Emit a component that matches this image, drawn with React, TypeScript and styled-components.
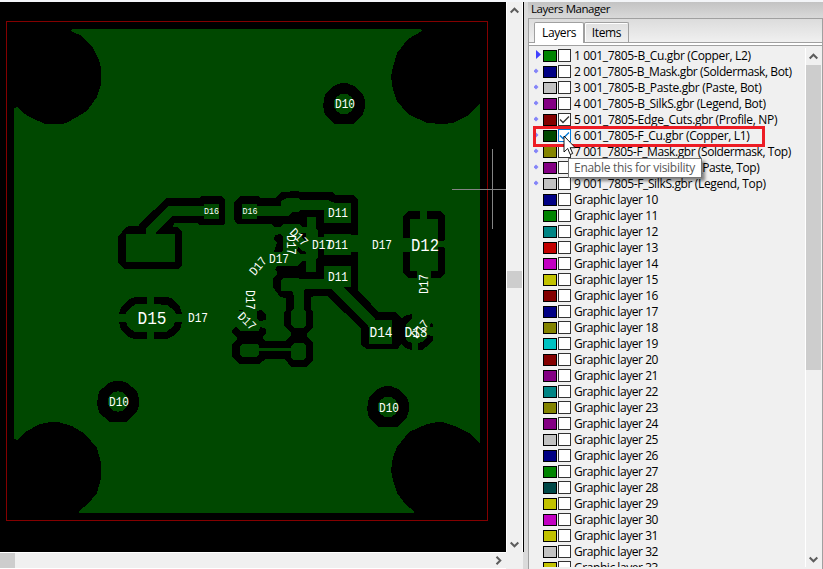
import React from 'react';
import styled, { createGlobalStyle } from 'styled-components';

const Global = createGlobalStyle`
  * { box-sizing: border-box; }
  body { margin: 0; overflow: hidden; background: #f0f0f0; font-family: "Open Sans", "Noto Sans", sans-serif; font-size: 12px; color: #000; }
`;

const Window = styled.div`
  display: flex;
  width: 823px;
  height: 569px;
  padding-top: 2px;
  background: #f3f5f8;
  overflow: hidden;
`;

const Viewer = styled.div`
  display: grid;
  grid-template-columns: 506px 17px;
  grid-template-rows: 550px 17px;
  width: 523px;
  flex: none;
  background: #f0f0f0;
`;

const Board = styled.svg`
  display: block;
  background: #000;
`;

const VBar = styled.div`
  display: flex;
  flex-direction: column;
  align-items: center;
  border-left: 1px solid #fff;
  border-right: 1px solid #fff;
  background: #f0f0f0;
`;

const HBar = styled.div`
  display: flex;
  align-items: center;
  border-top: 1px solid #fff;
  border-bottom: 1px solid #fff;
  background: #f0f0f0;
`;

const Spacer = styled.div<{ $size?: number }>`
  flex: ${p => (p.$size ? `0 0 ${p.$size}px` : '1')};
`;

const Thumb = styled.div<{ $w: number; $h: number }>`
  flex: none;
  width: ${p => p.$w}px;
  height: ${p => p.$h}px;
  background: #cdcdcd;
`;

const Divider = styled.div`
  flex: none;
  width: 5px;
  display: flex;
  flex-direction: column;
  background: #dadada;
`;

const DividerEdge = styled.div`
  width: 1px;
  height: 550px;
  background: #000;
`;

const Manager = styled.div`
  flex: 1;
  display: flex;
  flex-direction: column;
  height: 567px;
  background: #f0f0f0;
`;

const Title = styled.div`
  height: 16px;
  flex: none;
  padding-left: 3px;
  font-size: 11.5px;
  line-height: 13px;
  letter-spacing: -0.45px;
  background: linear-gradient(#c3c3c3, #d9d9d9);
`;

const Pane = styled.div`
  flex: 1;
  min-height: 0;
  display: flex;
  flex-direction: column;
  border: 1px solid #a0a0a0;
  border-bottom: 0;
`;

const TabStrip = styled.div`
  display: flex;
  align-items: flex-end;
  height: 24px;
  flex: none;
  padding-left: 5px;
  border-bottom: 1px solid #a0a0a0;
  background: linear-gradient(#dcdcdc, #f0f0f0);
`;

const Tab = styled.div<{ $active?: boolean; $w: number }>`
  width: ${p => p.$w}px;
  height: ${p => (p.$active ? 21 : 20)}px;
  margin-bottom: ${p => (p.$active ? -1 : 0)}px;
  border: 1px solid #a0a0a0;
  border-bottom: 0;
  border-radius: 2px 2px 0 0;
  background: ${p => (p.$active ? '#fff' : 'linear-gradient(#e0e0e0, #efefef)')};
  box-shadow: ${p => (p.$active ? 'none' : 'inset 1px 1px 0 #fff')};
  text-align: center;
  line-height: ${p => (p.$active ? 20 : 19)}px;
  letter-spacing: ${p => (p.$active ? -0.4 : -0.35)}px;
`;

const StripEdge = styled.div`
  flex: none;
  height: 3px;
  background: #fff;
  border-bottom: 1px solid #a0a0a0;
`;

const Body = styled.div`
  display: flex;
  height: 521px;
  flex: none;
  padding-top: 2px;
  overflow: hidden;
`;

const List = styled.div`
  flex: 1;
  overflow: hidden;
  background: #f0f0f0;
`;

const Row = styled.div`
  display: grid;
  grid-template-columns: 9px 14px 15px auto;
  justify-content: start;
  height: 16px;
  padding-left: 5px;
`;

const Marker = styled.svg`
  width: 9px;
  height: 16px;
  display: block;
`;

const Swatch = styled.div<{ $color: string }>`
  width: 14px;
  height: 12px;
  margin-top: 2px;
  border: 1px solid #000;
  background: ${p => p.$color};
`;

const Check = styled.div<{ $hot?: boolean }>`
  width: 13px;
  height: 13px;
  margin: 1px 0 0 1px;
  border: 1px solid ${p => (p.$hot ? '#0078d7' : '#333')};
  background: #fff;
  svg { display: block; }
`;

const Name = styled.div<{ $track: number }>`
  padding-left: 2px;
  white-space: nowrap;
  line-height: 16px;
  letter-spacing: ${p => p.$track}px;
`;

const ListBar = styled.div`
  display: flex;
  flex-direction: column;
  align-items: flex-start;
  width: 17px;
  flex: none;
  border-left: 1px solid #fff;
  background: #f0f0f0;
`;

const Highlight = styled.div`
  position: absolute;
  left: 533px;
  top: 126px;
  width: 232px;
  height: 21px;
  border: 3px solid #ed1c24;
`;

const Tooltip = styled.div`
  position: absolute;
  left: 568px;
  top: 158px;
  width: 134px;
  height: 20px;
  padding-left: 5px;
  border: 1px solid #767676;
  background: #fff;
  color: #575757;
  line-height: 18px;
  white-space: nowrap;
  letter-spacing: -0.28px;
  box-shadow: 3px 3px 3px rgba(0, 0, 0, 0.45);
`;

const Cursor = styled.svg`
  position: absolute;
  left: 563px;
  top: 135px;
`;

const colors = {
  green: '#008400', navy: '#000084', silver: '#c2c2c2', purple: '#840084', maroon: '#840000',
  dark: '#004800', olive: '#848400', teal: '#008484', red: '#c20000', magenta: '#c200c2',
  yellow: '#c2c200', cyan: '#00c2c2', deep: '#004848',
};

type Layer = { name: string; color: string; on?: boolean; hot?: boolean; track: number };

const fileLayers: Layer[] = [
  { name: '1 001_7805-B_Cu.gbr (Copper, L2)', color: colors.green, track: -0.34 },
  { name: '2 001_7805-B_Mask.gbr (Soldermask, Bot)', color: colors.navy, track: -0.39 },
  { name: '3 001_7805-B_Paste.gbr (Paste, Bot)', color: colors.silver, track: -0.33 },
  { name: '4 001_7805-B_SilkS.gbr (Legend, Bot)', color: colors.purple, track: -0.35 },
  { name: '5 001_7805-Edge_Cuts.gbr (Profile, NP)', color: colors.maroon, on: true, track: -0.32 },
  { name: '6 001_7805-F_Cu.gbr (Copper, L1)', color: colors.dark, on: true, hot: true, track: -0.33 },
  { name: '7 001_7805-F_Mask.gbr (Soldermask, Top)', color: colors.olive, track: -0.42 },
  { name: '8 001_7805-F_Paste.gbr (Paste, Top)', color: colors.purple, track: -0.4 },
  { name: '9 001_7805-F_SilkS.gbr (Legend, Top)', color: colors.silver, track: -0.36 },
];

const graphicColors = [
  'navy', 'green', 'teal', 'red', 'magenta', 'yellow', 'maroon', 'navy', 'olive', 'cyan', 'maroon', 'purple',
  'teal', 'olive', 'purple', 'silver', 'navy', 'green', 'deep', 'yellow', 'magenta', 'yellow', 'silver', 'yellow',
] as const;

const layers: Layer[] = [
  ...fileLayers,
  ...graphicColors.map((c, i) => ({ name: `Graphic layer ${i + 10}`, color: colors[c], track: -0.44 })),
];

const chevrons = {
  up: 'M1.2 7 L5 3.2 L8.8 7',
  down: 'M1.2 3 L5 6.8 L8.8 3',
  right: 'M3 1.2 L6.8 5 L3 8.8',
};

const Chevron = ({ dir }: { dir: keyof typeof chevrons }) => (
  <svg width="15" height="15" viewBox="-2.5 -2.5 15 15">
    <path d={chevrons[dir]} fill="none" stroke="#5c5c5c" strokeWidth="2" />
  </svg>
);

/* Clearance outlines cut out of the copper pour. */
const clearances = [
  'M167 198 H200 L201 196 H221 L225 200 V223 L223 225 H199 L198 223 H174 L173 227 L177 227 L182 232 V266 L178 269 H124 L118 263 V237 L126 227 L130 226 H139 L140 223 Z',
  'M241 196 H258 L261 198 H275 L282 192 L298 191 L300 192 H333 L335 195 H353 L358 200 V235 H351 V234 H324 V237 H318 V231 L316 228 V217 H307 V227 H302 L300 224 H283 L280 227 H274 L272 224 H237 L234 219 V202 Z',
  'M275 235 L280 234 L283 237 V250 L281 252 H274 L277 243 L274 239 Z',
  'M298 247 L301 250 L306 252 V254 H300 L297 251 Z',
  'M301 233 H306 V242 L303 239 Z',
  'M277 266 H298 L302 261 H306 V272 H316 V260 L318 257 V249 H324 V255 H351 V252 H358 V290 L378.5 312 H395 L399 316 L402 319 L404 316 L408 315 L412 314 V319 L407 323 L405 328 V336 L407 341 L412 343 V350 L405 348 L401 344 L398 349 H367 L361 345 V328.5 L327.5 296 H314 L311 297 L310.500 309 L313 312 V328 L307 333 V337 L313 342 V360 L307 367 H291 L285 359 H266 L259 364 H239 L232 357 V344 L237 339 V337 L232 333 V330 L236 327 L240 331 H259 L260 327 L266 329 V333 L263 336 V339 L266 341 H286 L291 335 V333 L284 325 V313 L286 310 V298 L280 297 L273 287 V279 L277 274 V272 L275 270 Z',
  'M257 311 L261 310 L266 315 V320 L259 321 L257 318 Z',
  'M239 310 H243 V311 H239 Z',
  'M403 238 V216 L408 211 H420 V219 H410 V238 Z',
  'M427 211 H440 L445 216 V239 L443 241 H438 V219 H427 Z',
  'M403 252 H410 V271 H417 V278 H408 L403 273 Z',
  'M438 247 H443 L445 249 V273 L441 278 H431 V271 H438 Z',
  'M418 343 L424 341 L427 337 V335 L433 336 V341 L426 347 L422 350 H418 Z',
  'M431 322 L433 325 V327 H430 Z',
  'M119 314 L121 307 L129 299 L135 297 H147 V304 H136 L130 308 L127 311 L126 314 Z',
  'M154 297 H167 L173 299 L180 307 L182 314 H176 L174 310 L167 305 L154 304 Z',
  'M119 322 H126 L128 327 L135 332 H147 V339 H134 L128 337 L121 330 Z',
  'M182 322 L180 330 L173 336 L167 339 H154 V332 H166 L173 327 L175 322 Z',
];

/* Pads and tracks inside the clearances. */
const copper = [
  'M126 234 H146 V228 L168 206 H204 V204 H219 V219 H204 V216 H172 L156 232 V234 H175 V262 H126 Z',
  'M242 204 H257 V206 H281 V201 L287 198 H298 L300 200 H328 L335 203 H351 V223 H324 V210 H300 L298 212 H292 L288 216 H257 V219 H242 Z',
  'M281 280 L284 278 H298 L300 279 H324 V266 H351 V287 H343.500 L376 320 H392 V344 H369 V327 L331.500 289 H305 L303.500 291 V309 L306 312 V325 L303 328 H294 L291 325 V312 L293.500 309 V295 L292 291 H281 Z',
  'M242 344 H257 L259 346 V348 H291 V346 L294 343 H303 L306 346 V357 L303 360 H293 L291 358 V351 H259 V354 L257 357 H242 L240 355 V346 Z',
];

const pour =
  'M72 29 H421 L422 31 L408 39 L397 53 L393 67 L391 77 L393 90 L397 101 L408 114 L427 123 L442 124 L453 123 L467 116 L480 103.500 ' +
  'V443.500 L469 433 L457 427 L443 422 H437 L427 424 L409 432 L397 447 L393 457 L391 470 L393 480 L397 493 L406 505 L414 511 V513 ' +
  'H79 V511 L88 504 L97 493 L101 478 V463 L97 448 L85 434 L72 426 L58 422 H50 L40 424 L25 432 L17 440 L14 439 ' +
  'V108 L17 107 L23 113 L32 118 L45 124 H63 L68 122 L77 117 L87 111 L97 97 L101 85 V68 L99 60 L93 48 L82 36 L71 31 Z';

const rings = [
  { x: 344, y: 104 },
  { x: 118, y: 401.5 },
  { x: 388, y: 407 },
];

type Label = { t: string; x: number; y: number; w?: number; s?: number; r?: number };

/* x, y give the centre of each label. */
const labels: Label[] = [
  { t: 'D10', x: 345, y: 104 }, { t: 'D10', x: 119, y: 402 }, { t: 'D10', x: 389, y: 407.5 },
  { t: 'D11', x: 338, y: 213 }, { t: 'D11', x: 338, y: 245 }, { t: 'D11', x: 338, y: 277 },
  { t: 'D12', x: 425, y: 245, w: 28, s: 16 }, { t: 'D15', x: 152, y: 318, w: 29, s: 16 },
  { t: 'D14', x: 381, y: 332, w: 23, s: 13 }, { t: 'D13', x: 416, y: 332, w: 23, s: 13 },
  { t: 'D17', x: 420, y: 329, r: -50 },
  { t: 'D16', x: 211.5, y: 211, w: 15, s: 9 }, { t: 'D16', x: 250, y: 211, w: 15, s: 9 },
  { t: 'D17', x: 382, y: 245 }, { t: 'D17', x: 198, y: 318 },
  { t: 'D17', x: 322, y: 245 }, { t: 'D17', x: 279, y: 259 },
  { t: 'D17', x: 424, y: 284, r: -90 }, { t: 'D17', x: 250, y: 300, r: 90 }, { t: 'D17', x: 291, y: 245, r: 90 },
  { t: 'D17', x: 258, y: 266, r: -50 }, { t: 'D17', x: 299, y: 237, r: 45 }, { t: 'D17', x: 247, y: 321, r: 45 },
];

const BoardView = () => (
  <Board width="506" height="550" viewBox="0 2 506 550">
    <g shapeRendering="crispEdges">
      <path d={pour} fill="#004800" />
      {rings.map((c, i) => (
        <g key={i}>
          <path
            transform={`translate(${c.x} ${c.y})`}
            d="M-3 -21 H3 L10 -18 L19 -10 L21 -3 V4 L19 10 L9 20 H-9 L-19 11 L-21 2 L-19 -10 L-10 -18 Z"
            fill="#000"
          />
          <circle cx={c.x} cy={c.y} r="10.200" fill="#004800" />
        </g>
      ))}
      {clearances.map((d, i) => <path key={i} d={d} fill="#000" />)}
      {copper.map((d, i) => <path key={i} d={d} fill="#004800" />)}
      <rect x="6.500" y="21.500" width="481" height="499" fill="none" stroke="#840000" />
      <path d="M452 189.500 H506 M492.500 149 V229" stroke="#848484" />
    </g>
    <g fill="#fff" fontFamily='"Liberation Mono", "DejaVu Sans Mono", monospace' textAnchor="middle">
      {labels.map((l, i) => {
        const size = (l.s ?? 11.5) * 1.1;
        return (
          <text
            key={i}
            transform={`translate(${l.x} ${l.y}) rotate(${l.r ?? 0})`}
            y={size * 0.33}
            fontSize={size}
            textLength={l.w ?? 20}
            lengthAdjust="spacingAndGlyphs"
          >
            {l.t}
          </text>
        );
      })}
    </g>
  </Board>
);

const LayerRow = ({ layer, current, index }: { layer: Layer; current: boolean; index: number }) => (
  <Row>
    <Marker viewBox="0 0 9 16">
      {current && <path d="M2 2 L7 6.500 L2 11 Z" fill="#4040ff" />}
      {!current && index < 9 && <path d="M2 4.500 L4.500 7 L2 9.500 L-0.500 7 Z" fill="#8484f8" />}
    </Marker>
    <Swatch $color={layer.color} />
    <Check $hot={layer.hot}>
      {layer.on && (
        <svg width="11" height="11">
          <path d="M1 5.500 L4 8.500 L10 2.500" fill="none" stroke={layer.hot ? '#0078d7' : '#333'} strokeWidth="1.300" />
        </svg>
      )}
    </Check>
    <Name $track={layer.track}>{layer.name}</Name>
  </Row>
);

export default function App() {
  return (
    <>
      <Global />
      <Window>
        <Viewer>
          <BoardView />
          <VBar>
            <Spacer $size={1} />
            <Chevron dir="up" />
            <Spacer $size={253} />
            <Thumb $w={15} $h={17} />
            <Spacer />
            <Chevron dir="down" />
          </VBar>
          <HBar>
            <Thumb $w={15} $h={15} />
            <Spacer />
            <Chevron dir="right" />
          </HBar>
        </Viewer>
        <Divider>
          <DividerEdge />
        </Divider>
        <Manager>
          <Title>Layers Manager</Title>
          <Pane>
            <TabStrip>
              <Tab $active $w={50}>Layers</Tab>
              <Tab $w={45}>Items</Tab>
            </TabStrip>
            <StripEdge />
            <Body>
              <List>
                {layers.map((l, i) => <LayerRow key={l.name} layer={l} index={i} current={i === 0} />)}
              </List>
              <ListBar>
                <Spacer $size={1} />
                <Chevron dir="up" />
                <Spacer $size={1} />
                <Thumb $w={15} $h={305} />
                <Spacer />
                <Chevron dir="down" />
              </ListBar>
            </Body>
          </Pane>
        </Manager>
      </Window>
      <Highlight />
      <Tooltip>Enable this for visibility</Tooltip>
      <Cursor width="13" height="21" viewBox="0 0 13 21">
        <path d="M1 1 V17 L4.700 13.500 L7.200 19.500 L9.700 18.500 L7.200 12.700 H12.200 Z" fill="#fff" stroke="#000" strokeWidth="0.900" />
      </Cursor>
    </>
  );
}
